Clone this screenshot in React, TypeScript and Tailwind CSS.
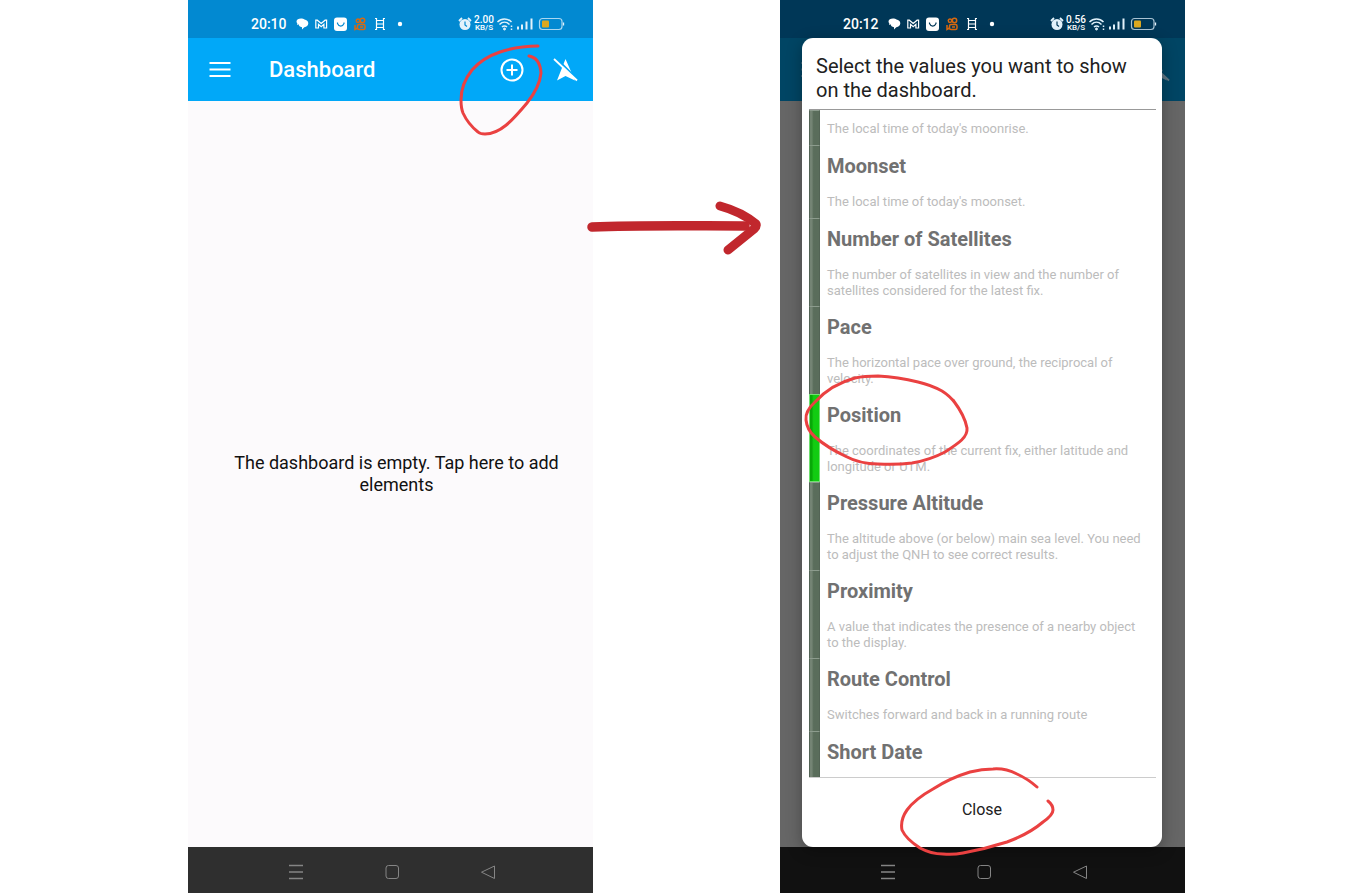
import type { ReactNode } from 'react';

type Metric = { name?: string; detail?: string; checked?: boolean };

const metrics: Metric[] = [
  { detail: "The local time of today's moonrise." },
  { name: 'Moonset', detail: "The local time of today's moonset." },
  { name: 'Number of Satellites', detail: 'The number of satellites in view and the number of satellites considered for the latest fix.' },
  { name: 'Pace', detail: 'The horizontal pace over ground, the reciprocal of velocity.' },
  { name: 'Position', detail: 'The coordinates of the current fix, either latitude and longitude or UTM.', checked: true },
  { name: 'Pressure Altitude', detail: 'The altitude above (or below) main sea level. You need to adjust the QNH to see correct results.' },
  { name: 'Proximity', detail: 'A value that indicates the presence of a nearby object to the display.' },
  { name: 'Route Control', detail: 'Switches forward and back in a running route' },
  { name: 'Short Date' },
];

function StatusBar({ time, rate, ink }: { time: string; rate: string; ink: string }) {
  return (
    <div className="flex h-[38px] shrink-0 items-center justify-between pl-[63px] pr-[27px] pt-[9px] text-white">
      <div className="flex items-center">
        <span className="w-[45px] text-[14px] leading-4 font-medium">{time}</span>
        <svg width="110" height="16" viewBox="0 0 110 16" fill="none" aria-hidden="true">
          <path d="M.500 5.500C.500 3.500 2.500 2.500 5 2.500c1.500 0 2.500.300 3.500 1 2 .300 3.800 1.600 3.800 3.700 0 2.200-1.800 3.700-4 4L6 13.500v-2.300C3.800 11 2.800 9.800 2.600 8.300L1 9l.300-1.800C.700 6.700.500 6.200.500 5.500z" fill="white" />
          <path d="M19.800 12V4.200h1.500l3.900 3.300 3.900-3.300h1.500V12h-2.700V8.300l-2.700 2.300-2.700-2.300V12z" stroke="white" strokeWidth="1.200" />
          <rect x="38" y="1.500" width="13" height="13.500" rx="3" fill="white" />
          <path d="M41.500 6.500v1c1.500 3.500 5 3.500 6.500 0v-1" stroke={ink} strokeWidth="1.200" />
          <g stroke="#d9690f" strokeWidth="1.500">
            <circle cx="62" cy="4.800" r="1.700" />
            <circle cx="66.500" cy="4.500" r="2.200" />
            <rect x="61.500" y="8.500" width="7.500" height="5" rx="1.500" />
            <path d="M59 9v4.500l2.500-1.500M64 11h3" />
          </g>
          <path d="M80.500 2v12M87.500 2v12M80.500 4.500h7M80.500 8h7M80.500 11.500h7M79 13.500h1.500M87.500 13.500H89M79 2.500h1.500M87.500 2.500H89" stroke="white" strokeWidth="1.200" />
          <circle cx="104" cy="8" r="2.200" fill="white" />
        </svg>
      </div>
      <div className="flex items-center">
        <svg width="14" height="14" viewBox="0 0 14 14" fill="none" aria-hidden="true">
          <circle cx="7" cy="7.500" r="5.500" fill="#e2f2fb" />
          <path d="M1 4l3-3M10 1l3 3" stroke="#e2f2fb" strokeWidth="1.800" />
          <path d="M7 4.500V8l2 1.500" stroke={ink} strokeWidth="1.200" />
        </svg>
        <span className="flex w-6 flex-col items-center font-[Roboto] font-medium">
          <span className="text-[10px] leading-[8px]">{rate}</span>
          <span className="text-[8px] leading-[8px]">KB/S</span>
        </span>
        <svg width="70" height="16" viewBox="0 0 70 16" fill="none" stroke="#e2f2fb" aria-hidden="true">
          <path d="M1.500 6c4-4 10-4 14 0M3.500 8.500c3-3 7-3 10 0M6 11c1.500-1.500 3.500-1.500 5 0" strokeWidth="1.500" />
          <circle cx="8.500" cy="13" r="1" fill="#e2f2fb" />
          <path d="M15.500 9.500v1.500M15.500 12.500v1.500" strokeWidth="1.500" />
          <path d="M22 13.500v-3M26 13.500v-5M30.500 13.500v-8M35.500 13.500v-11" strokeWidth="2" />
          <rect x="43.500" y="2.500" width="22.500" height="11" rx="3" strokeWidth="1.200" strokeOpacity=".75" />
          <path d="M67.500 6.500v3" strokeWidth="1.300" />
          <rect x="46" y="4.500" width="7" height="7" rx="1" fill="#dca820" stroke="none" />
        </svg>
      </div>
    </div>
  );
}

function MenuIcon() {
  return (
    <svg width="22" height="16" viewBox="0 0 22 16" stroke="currentColor" strokeWidth="1.800" aria-hidden="true">
      <path d="M.500 1h21M.500 7.500h21M.500 14h21" />
    </svg>
  );
}

function GpsOffIcon({ backdrop }: { backdrop: string }) {
  return (
    <svg width="26" height="26" viewBox="0 0 26 26" fill="none" aria-hidden="true">
      <path d="M12.500 2L22 23.500l-9.500-4.500L4 23.500z" fill="currentColor" />
      <path d="M3 1l22 22" stroke={backdrop} strokeWidth="2" />
      <path d="M1 2l23 21.500" stroke="currentColor" strokeWidth="1.800" />
    </svg>
  );
}

function NavBar({ className }: { className: string }) {
  return (
    <nav aria-label="System" className={`flex h-[46px] shrink-0 items-center justify-center gap-20 pt-1 pl-[2px] ${className}`}>
      <button type="button" aria-label="Recent apps" className="text-[#858585]">
        <svg width="16" height="16" viewBox="0 0 16 16" stroke="currentColor" strokeWidth="1.500"><path d="M1 1.500h14M1 8h14M1 14.500h14" /></svg>
      </button>
      <button type="button" aria-label="Home" className="text-[#858585]">
        <svg width="16" height="16" viewBox="0 0 16 16" fill="none" stroke="currentColor"><rect x="2" y="1.500" width="12.500" height="13" rx="2.500" /></svg>
      </button>
      <button type="button" aria-label="Back" className="text-[#858585]">
        <svg width="16" height="16" viewBox="0 0 16 16" fill="none" stroke="currentColor" strokeLinejoin="round"><path d="M14.500 2v12.500L1.500 8.200z" /></svg>
      </button>
    </nav>
  );
}

function Marks({ children }: { children: ReactNode }) {
  return (
    <svg className="pointer-events-none absolute top-0 left-0 h-full w-full overflow-visible" fill="none" stroke="#ea4141" strokeWidth="3" strokeLinecap="round" strokeLinejoin="round" aria-hidden="true">
      {children}
    </svg>
  );
}

function MetricRow({ metric, first, last }: { metric: Metric; first: boolean; last: boolean }) {
  const size = first ? 'h-[35px] pt-[11px]' : last ? 'pt-[9px]' : 'min-h-[73px] pt-[9px] pb-[7px]';
  return (
    <li className={`flex ${last ? 'flex-1' : ''}`}>
      <label className="flex flex-1">
        <input
          type="checkbox"
          defaultChecked={metric.checked}
          aria-label={metric.name ?? metric.detail}
          className="w-[11px] shrink-0 appearance-none border-x border-t border-[#536455] border-t-[#8c9b8d] bg-[#60735f] bg-linear-to-r from-[#748474] from-20% to-[#5a6d5b] to-40% checked:border checked:border-[#70e070] checked:from-[#08a808] checked:to-[#12cc12]"
        />
        <span className={`flex flex-1 flex-col gap-4 pl-[7px] ${size}`}>
          {metric.name && <span className="text-[20px] leading-6 font-bold text-[#717171]">{metric.name}</span>}
          {metric.detail && <span className="pr-3 text-[13px] leading-4 text-[#bcbcbc]">{metric.detail}</span>}
        </span>
      </label>
    </li>
  );
}

export default function App() {
  return (
    <main className="flex min-h-screen justify-center bg-white pl-[22px] font-[Roboto,sans-serif]">
      <section className="relative flex w-[405px] flex-col bg-[#fcfafc]">
        <div className="bg-[#0289d1]">
          <StatusBar time="20:10" rate="2.00" ink="#0289d1" />
        </div>
        <header className="flex h-[63px] shrink-0 items-center bg-[#01a8f8] pr-[14px] pl-[21px] text-white">
          <button type="button" aria-label="Menu"><MenuIcon /></button>
          <h1 className="ml-[38px] flex-1 text-[22px] leading-7 font-medium">Dashboard</h1>
          <button type="button" aria-label="Add" className="mr-[29px]">
            <svg width="24" height="24" viewBox="0 0 24 24" fill="none" stroke="currentColor" strokeWidth="2">
              <circle cx="12" cy="12" r="10.500" />
              <path d="M12 6.500v11M6.500 12h11" />
            </svg>
          </button>
          <button type="button" aria-label="Location off"><GpsOffIcon backdrop="#01a8f8" /></button>
        </header>
        <button type="button" className="flex-1 pr-7 pl-10 text-center text-[18px] leading-[22px] text-[#111]">
          The dashboard is empty. Tap here to add elements
        </button>
        <NavBar className="bg-[#2f2f2f]" />
        <Marks>
          <path d="M350 46C336 46 324 48 312 52C300 56 291 62 284 70C276 80 273 91 273 100Q273 108 275 113Q280 124 290 132Q292 134 297 134C312 134 324 121 339 103C347 93 352 83 353 73Q352 58 341 56" />
        </Marks>
      </section>

      <div className="relative w-[187px]">
        <svg className="pointer-events-none absolute top-[196px] left-0 z-10 h-16 w-full overflow-visible" viewBox="0 0 187 64" preserveAspectRatio="xMinYMin" fill="none" stroke="#c1272d" strokeLinecap="round" strokeLinejoin="round" aria-hidden="true">
          <path d="M-1 31C50 29 100 30 152 30" strokeWidth="9.500" />
          <path d="M127 10Q149 16 163 28Q164 30 161 33L135 54" strokeWidth="9" />
        </svg>
      </div>

      <section className="relative flex w-[405px] flex-col bg-[#666]">
        <div className="bg-[#003757]">
          <StatusBar time="20:12" rate="0.56" ink="#003757" />
        </div>
        <div className="flex h-[63px] shrink-0 items-center justify-between bg-[#004564] pr-[14px] pl-[21px] text-[#627784]">
          <MenuIcon />
          <GpsOffIcon backdrop="#004564" />
        </div>
        <div className="flex-1" />
        <NavBar className="bg-[#111]" />
        <div role="dialog" aria-labelledby="picker-title" className="absolute top-[38px] right-[23px] bottom-[46px] left-[22px] flex flex-col rounded-[11px] bg-white shadow-[0_4px_16px_rgba(0,0,0,0.3)]">
          <h2 id="picker-title" className="px-[14px] pt-4 pb-[7px] text-[20px] leading-6 text-[#212121]">
            Select the values you want to show on the dashboard.
          </h2>
          <ul className="mr-[6px] ml-[7px] flex flex-1 flex-col overflow-hidden border-y border-t-[#999] border-b-[#ccc]">
            {metrics.map((metric, i) => (
              <MetricRow key={metric.name ?? 'first'} metric={metric} first={i === 0} last={i === metrics.length - 1} />
            ))}
          </ul>
          <button type="button" className="h-[69px] shrink-0 pb-[6px] text-[16px] text-[#212121]">Close</button>
        </div>
        <Marks>
          <path d="M175 403Q170 396 162 391Q151 385 138 382Q118 377 98 376Q84 376 75 378C60 382 45 391 35 402Q25 411 26 420Q27 430 35 437Q48 448 65 456Q80 464 98 464Q117 465 132 463Q150 460 165 452C179 443 188 437 187 428Q185 416 173 400" />
          <path d="M257 787Q248 779 237 774Q225 768 213 769Q202 769 190 772Q170 778 153 789Q135 799 127 810Q120 820 122 830Q126 839 140 848Q151 854 163 854Q173 855 183 853Q205 849 227 842Q249 834 263 822Q273 815 273 810Q273 805 268 801" />
        </Marks>
      </section>
    </main>
  );
}
